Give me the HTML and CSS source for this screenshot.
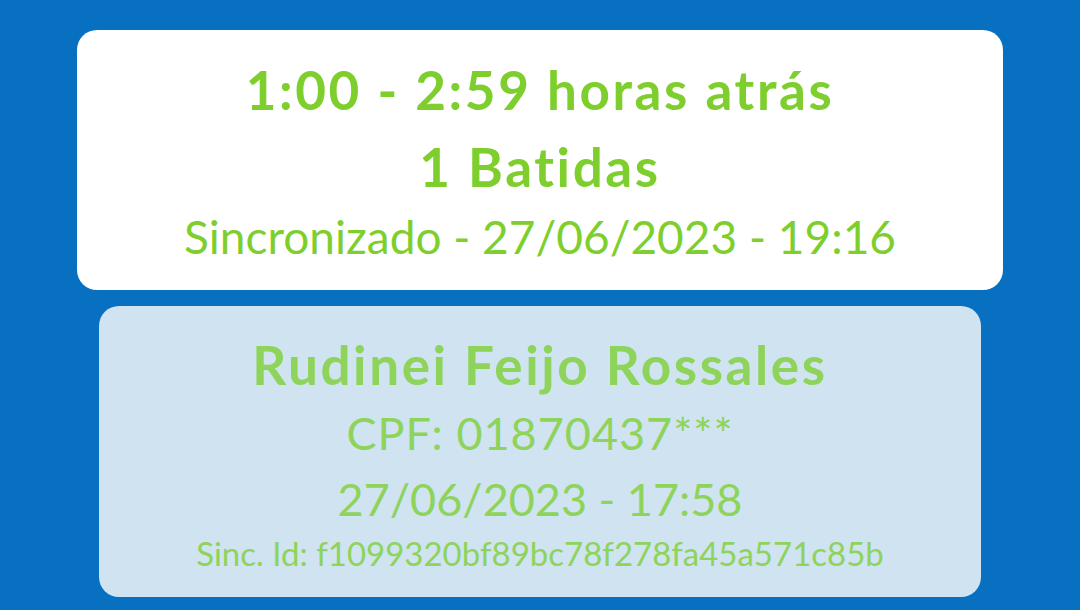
FILE: index.html
```html
<!DOCTYPE html>
<html lang="pt-BR">
<head>
<meta charset="utf-8">
<link rel="stylesheet" href="styles.css">
</head>
<body>
<div class="screen">
  <section class="card summary">
    <div class="line title">1:00 - 2:59 horas atrás</div>
    <div class="line count">1 Batidas</div>
    <div class="line sync">Sincronizado - 27/06/2023 - 19:16</div>
  </section>
  <section class="card record">
    <div class="line name">Rudinei Feijo Rossales</div>
    <div class="line cpf">CPF: 01870437***</div>
    <div class="line date">27/06/2023 - 17:58</div>
    <div class="line sid">Sinc. Id: f1099320bf89bc78f278fa45a571c85b</div>
  </section>
</div>
</body>
</html>
```

FILE: styles.css
```css
html, body {
  margin: 0;
  padding: 0;
  background: #0870c0;
}
.screen {
  width: 1080px;
  height: 610px;
  display: flex;
  flex-direction: column;
  align-items: center;
  padding-top: 30px;
  box-sizing: border-box;
  gap: 16px;
  font-family: "Lato", "Noto Sans", sans-serif;
}
.card {
  border-radius: 20px;
  display: flex;
  flex-direction: column;
  align-items: center;
  box-sizing: border-box;
}
.line {
  white-space: nowrap;
  line-height: 1;
}
.summary {
  width: 926px;
  height: 260px;
  background: #ffffff;
  color: #7ecf2e;
}
.title, .count, .name {
  font-size: 53px;
  font-weight: 700;
  letter-spacing: 2.6px;
}
.title { margin-top: 33px; }
.count { margin-top: 24px; }
.sync { font-size: 46px; margin-top: 21px; }
.record {
  width: 882px;
  height: 291px;
  background: #cfe3f1;
  color: #8ed35a;
}
.name { margin-top: 32px; }
.cpf { font-size: 45px; letter-spacing: 1px; margin-top: 20px; }
.date { font-size: 45px; margin-top: 21px; }
.sid { font-size: 33px; margin-top: 15px; }
```
